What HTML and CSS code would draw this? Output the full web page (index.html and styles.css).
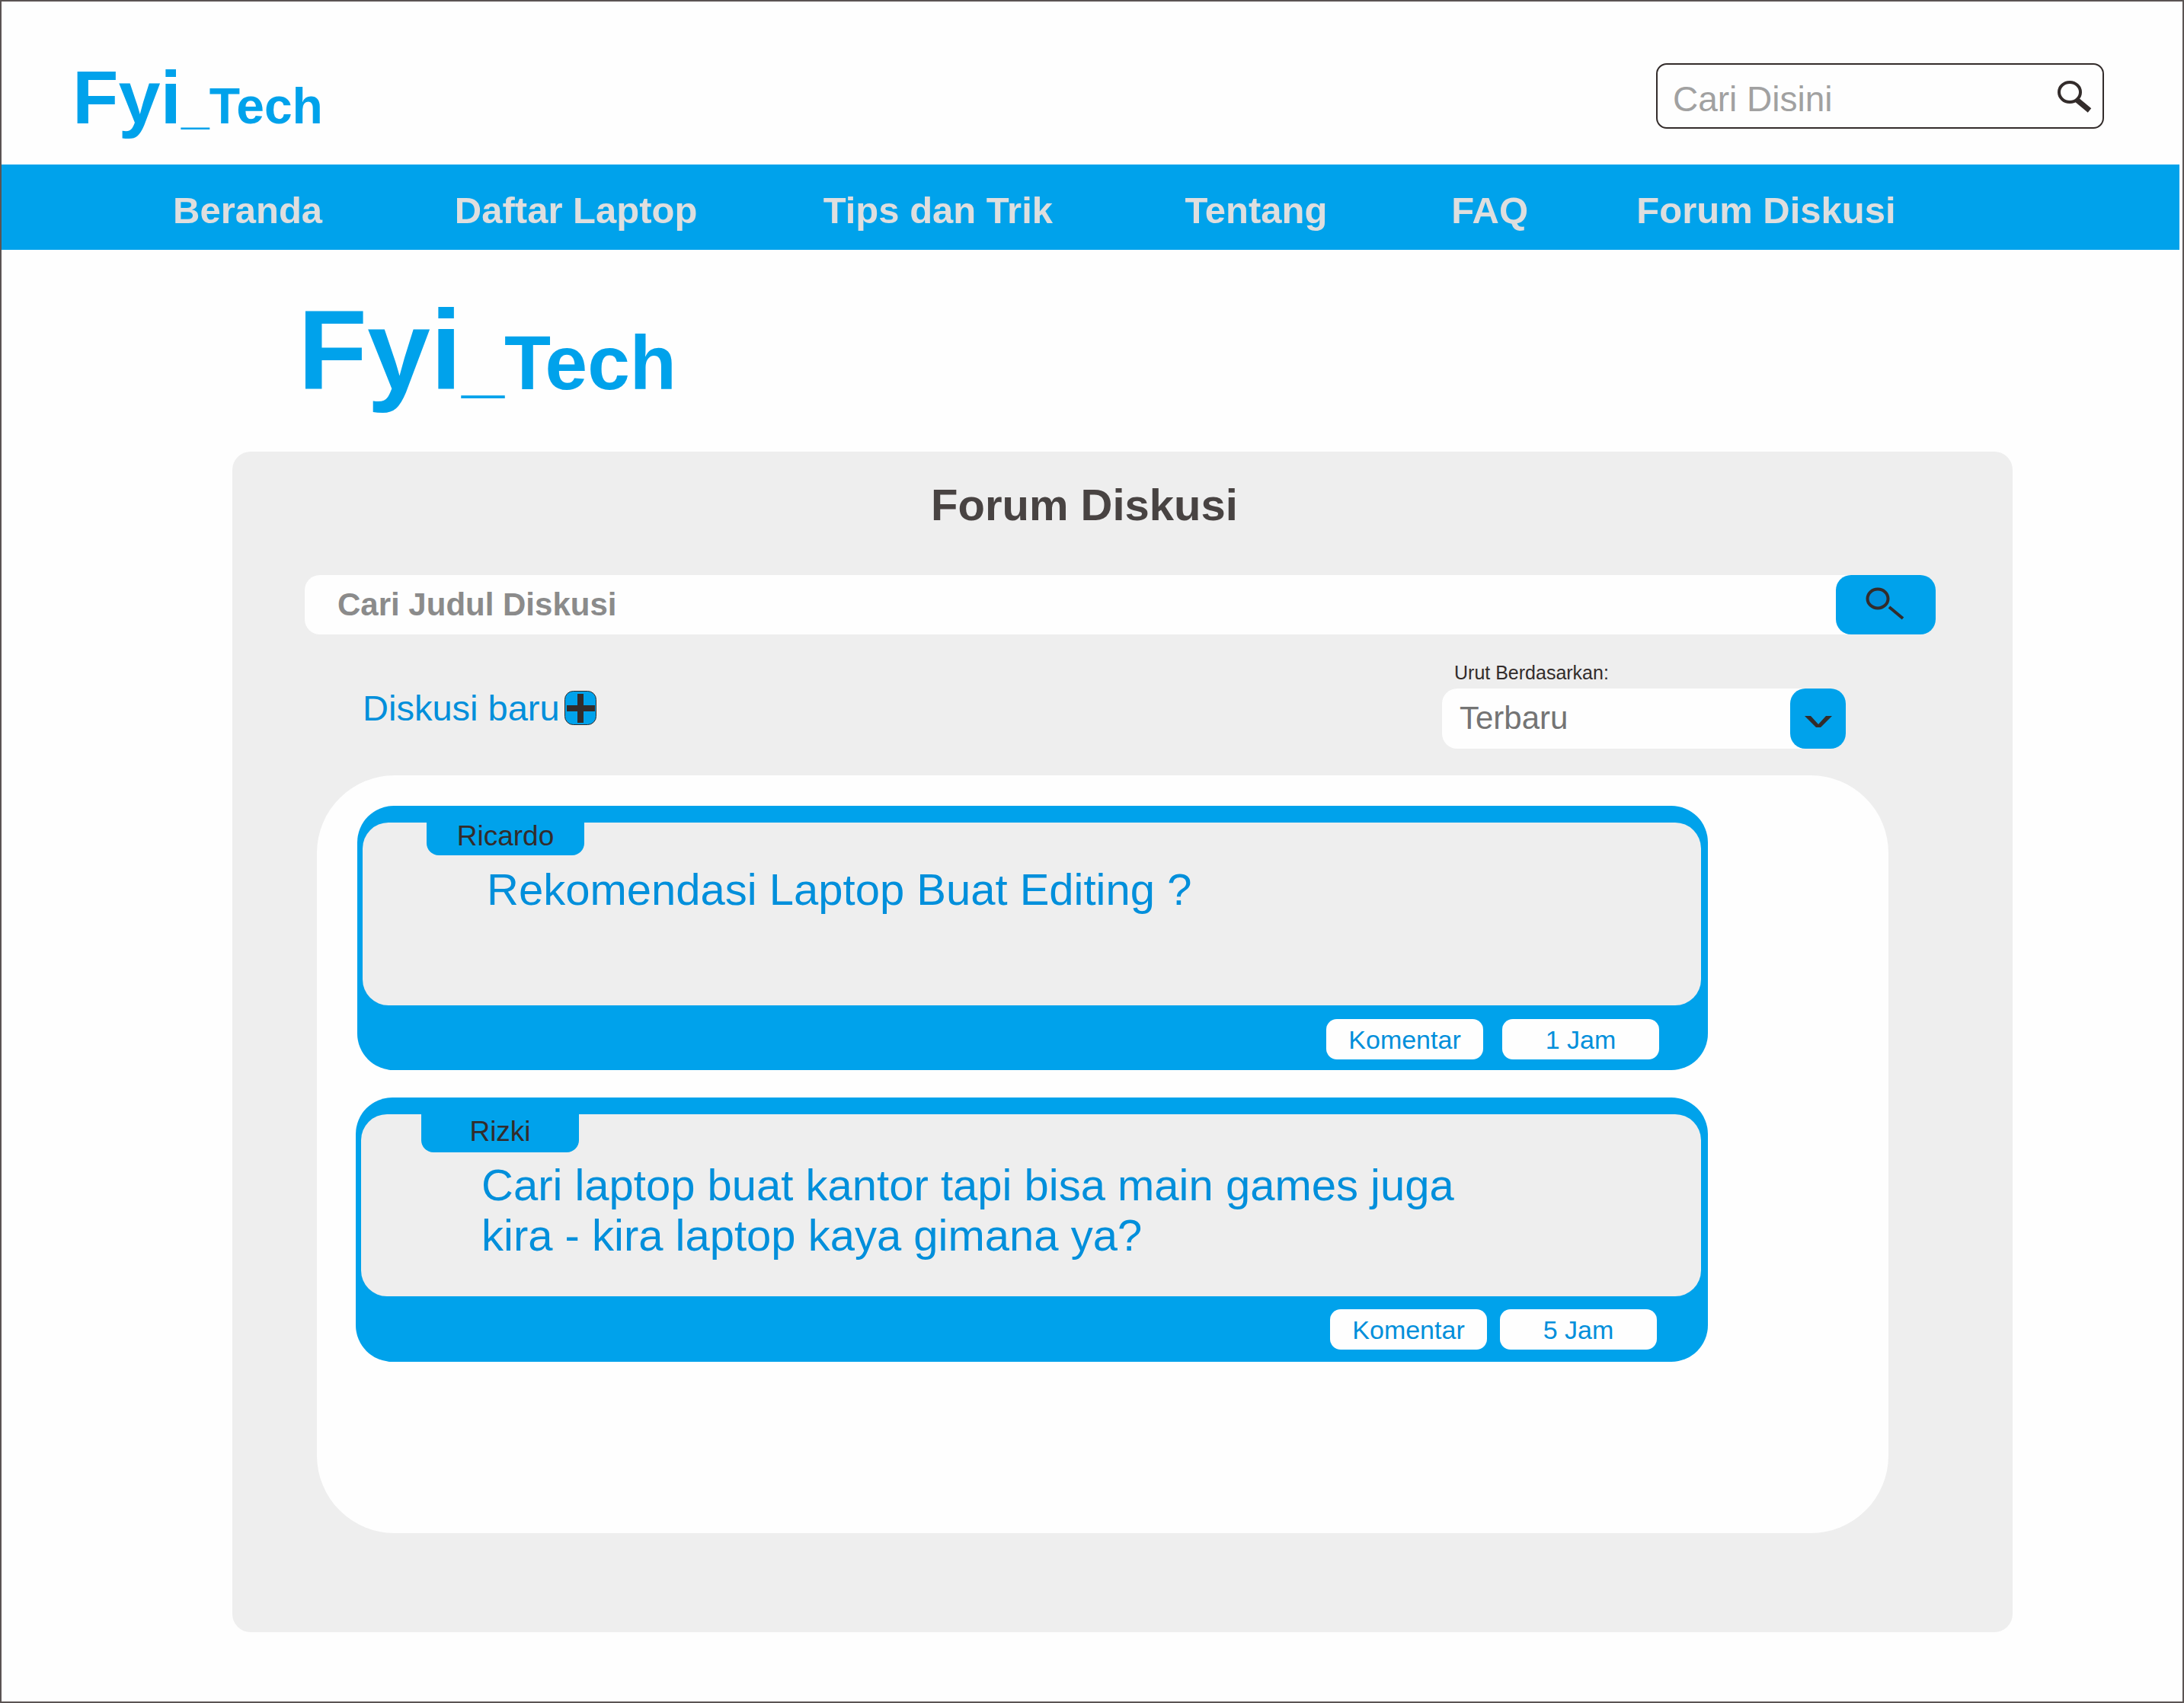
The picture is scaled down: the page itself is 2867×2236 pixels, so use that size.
FILE: index.html
```html
<!DOCTYPE html>
<html lang="id">
<head>
  <meta charset="utf-8">
  <meta name="viewport" content="width=device-width, initial-scale=1">
  <title>Forum Diskusi - Fyi_Tech</title>
  <link rel="stylesheet" href="styles.css">
</head>
<body class="page">
  <header class="header">
    <a class="logo" href="#">Fyi<span class="logo-tail">_Tech</span></a>
    <form class="site-search" role="search">
      <input class="site-search-input" type="search" placeholder="Cari Disini" aria-label="Cari Disini">
      <button class="site-search-button" type="button" aria-label="Cari">
        <svg width="46" height="44" viewBox="0 0 46 44" aria-hidden="true">
          <ellipse cx="17" cy="17" rx="14" ry="13" fill="none" stroke="#332c2b" stroke-width="4"/>
          <path d="M25 26 L43 41" stroke="#332c2b" stroke-width="7"/>
        </svg>
      </button>
    </form>
  </header>

  <nav class="nav" aria-label="Menu utama">
    <a class="nav-link" href="#">Beranda</a>
    <a class="nav-link" href="#">Daftar Laptop</a>
    <a class="nav-link" href="#">Tips dan Trik</a>
    <a class="nav-link" href="#">Tentang</a>
    <a class="nav-link" href="#">FAQ</a>
    <a class="nav-link" href="#">Forum Diskusi</a>
  </nav>

  <main class="main">
    <div class="logo logo--large">Fyi<span class="logo-tail">_Tech</span></div>

    <section class="forum">
      <h1 class="forum-title">Forum Diskusi</h1>

      <form class="topic-search" role="search">
        <input class="topic-search-input" type="search" placeholder="Cari Judul Diskusi" aria-label="Cari Judul Diskusi">
        <button class="topic-search-button" type="button" aria-label="Cari diskusi">
          <svg width="52" height="44" viewBox="0 0 52 44" aria-hidden="true">
            <ellipse cx="17" cy="16" rx="13.5" ry="12.5" fill="#008fdb" stroke="#332c2b" stroke-width="4"/>
            <path d="M32 27 L50 42" stroke="#332c2b" stroke-width="4"/>
          </svg>
        </button>
      </form>

      <div class="toolbar">
        <a class="new-topic" href="#">Diskusi baru
          <svg class="new-topic-icon" width="42" height="45" viewBox="0 0 42 45" aria-hidden="true">
            <rect x="0.5" y="0.5" width="41" height="44" rx="11" fill="#00a2eb" stroke="#332c2b"/>
            <path d="M21 4 V42 M3 23 H40" stroke="#332c2b" stroke-width="8"/>
          </svg>
        </a>
        <div class="sort">
          <label class="sort-label" for="sort">Urut Berdasarkan:</label>
          <div class="sort-field">
            <select class="sort-select" id="sort">
              <option>Terbaru</option>
            </select>
            <span class="sort-arrow">
              <svg width="36" height="15" viewBox="0 0 36 15" aria-hidden="true">
                <path d="M0 0 H8 L18 11 L28 0 H36 L21 15 H15 Z" fill="#332c2b"/>
              </svg>
            </span>
          </div>
        </div>
      </div>

      <div class="topics">
        <article class="topic">
          <div class="topic-body">
            <span class="topic-author">Ricardo</span>
            <h2 class="topic-title">Rekomendasi Laptop Buat Editing ?</h2>
          </div>
          <footer class="topic-footer">
            <button class="pill" type="button">Komentar</button>
            <span class="pill">1 Jam</span>
          </footer>
        </article>

        <article class="topic topic--long">
          <div class="topic-body">
            <span class="topic-author">Rizki</span>
            <h2 class="topic-title">Cari laptop buat kantor tapi bisa main games juga<br>kira - kira laptop kaya gimana ya?</h2>
          </div>
          <footer class="topic-footer">
            <button class="pill" type="button">Komentar</button>
            <span class="pill">5 Jam</span>
          </footer>
        </article>
      </div>
    </section>
  </main>
</body>
</html>
```
FILE: styles.css
```css
:root {
  --blue: #00a2eb;
  --blue-text: #008fdb;
  --ink: #332c2b;
  --panel: #eeeeee;
  --paper: #fefefe;
}

* {
  box-sizing: border-box;
}

.page {
  margin: 0;
  min-height: 100vh;
  border: 2px solid #5a5453;
  background: var(--paper);
  color: var(--ink);
  font-family: "Liberation Sans", Arial, sans-serif;
}

input,
select,
button {
  margin: 0;
  padding: 0;
  border: 0;
  background: none;
  color: inherit;
  font-family: inherit;
  appearance: none;
}

/* Header */
.header {
  display: flex;
  align-items: center;
  justify-content: space-between;
  padding: 62px 103px 28px 93px;
}

.logo {
  padding-top: 4px;
  color: var(--blue);
  font-size: 99px;
  font-weight: bold;
  line-height: 120px;
  text-decoration: none;
  white-space: nowrap;
}

.logo-tail {
  font-size: 66px;
  line-height: 1;
}

.logo--large {
  padding: 4px 0 0 86px;
  font-size: 149px;
  line-height: 160px;
}

.logo--large .logo-tail {
  font-size: 100px;
}

.site-search {
  display: flex;
  align-items: center;
  width: 588px;
  height: 86px;
  padding: 0 14px 0 20px;
  border: 2px solid var(--ink);
  border-radius: 14px;
}

.site-search-input {
  flex: 1;
  min-width: 0;
  height: 60px;
  padding-top: 8px;
  font-size: 46px;
}

.site-search-input::placeholder {
  color: #a1a1a1;
  opacity: 1;
}

.site-search-button,
.topic-search-button,
.sort-arrow {
  display: flex;
  align-items: center;
  justify-content: center;
}

/* Navigation */
.nav {
  display: grid;
  grid-template-columns: 370fr 484fr 475fr 350fr 243fr 713fr;
  align-items: center;
  min-height: 112px;
  margin: 0 4px 0 -2px;
  padding: 8px 0 0 227px;
  background: var(--blue);
}

.nav-link {
  color: #dedede;
  font-size: 49px;
  font-weight: bold;
  line-height: 56px;
  text-decoration: none;
  white-space: nowrap;
}

/* Forum */
.main {
  padding: 48px 223px 91px 303px;
}

.forum {
  margin-top: 53px;
  padding: 36px 0 130px;
  border-radius: 24px;
  background: var(--panel);
}

.forum-title {
  margin: 0;
  padding-right: 100px;
  color: #484342;
  font-size: 58px;
  line-height: 68px;
  text-align: center;
}

.topic-search {
  display: flex;
  height: 78px;
  margin: 58px 101px 0 95px;
  border-radius: 20px;
  background: var(--paper);
}

.topic-search-input {
  flex: 1;
  min-width: 0;
  padding-left: 43px;
  font-size: 42px;
  font-weight: bold;
}

.topic-search-input::placeholder {
  color: #8b8b8b;
  opacity: 1;
}

.topic-search-button {
  width: 131px;
  padding: 0 4px 4px 0;
  border-radius: 20px;
  background: var(--blue);
}

.toolbar {
  display: flex;
  align-items: center;
  justify-content: space-between;
  margin: 35px 219px 0 171px;
}

.new-topic {
  display: flex;
  align-items: center;
  gap: 6px;
  padding-top: 8px;
  color: var(--blue-text);
  font-size: 47px;
  line-height: 56px;
  text-decoration: none;
}

.sort {
  display: flex;
  flex-direction: column;
  gap: 6px;
  width: 530px;
}

.sort-label {
  padding-left: 16px;
  font-size: 25px;
  line-height: 30px;
}

.sort-field {
  position: relative;
  display: flex;
  height: 79px;
  border-radius: 20px;
  background: var(--paper);
}

.sort-select {
  flex: 1;
  padding: 0 90px 3px 23px;
  color: #747474;
  font-size: 42px;
}

.sort-arrow {
  position: absolute;
  top: 0;
  right: 0;
  width: 73px;
  height: 79px;
  padding-top: 8px;
  border-radius: 20px;
  background: var(--blue);
  pointer-events: none;
}

/* Topic list */
.topics {
  display: flex;
  flex-direction: column;
  gap: 36px;
  margin: 35px 163px 0 111px;
  padding: 40px 237px 225px 53px;
  border-radius: 102px;
  background: var(--paper);
}

.topic {
  padding: 22px 9px 0 7px;
  border-radius: 48px;
  background: var(--blue);
}

.topic-body {
  display: flex;
  flex-direction: column;
  align-items: flex-start;
  min-height: 240px;
  padding-left: 84px;
  border-radius: 34px;
  background: var(--panel);
}

.topic-author {
  display: flex;
  align-items: center;
  justify-content: center;
  width: 207px;
  height: 43px;
  padding-bottom: 8px;
  border-radius: 0 0 16px 16px;
  background: var(--blue);
  font-size: 37px;
}

.topic-title {
  margin: 12px 0 0;
  padding-left: 79px;
  color: var(--blue-text);
  font-size: 58px;
  font-weight: normal;
  line-height: 66px;
}

.topic-footer {
  display: flex;
  justify-content: flex-end;
  gap: 25px;
  padding: 18px 55px 14px 0;
}

.pill {
  display: flex;
  align-items: center;
  justify-content: center;
  width: 206px;
  height: 53px;
  border-radius: 14px;
  background: var(--paper);
  color: var(--blue-text);
  font-size: 34px;
  line-height: 40px;
}

.topic--long {
  margin-left: -2px;
}

.topic--long .topic-body {
  min-height: 239px;
  padding-left: 79px;
}

.topic--long .topic-author {
  height: 50px;
  padding-bottom: 4px;
}

.topic--long .topic-title {
  margin-top: 10px;
}

.topic--long .topic-footer {
  gap: 17px;
  padding: 17px 58px 16px 0;
}
```
